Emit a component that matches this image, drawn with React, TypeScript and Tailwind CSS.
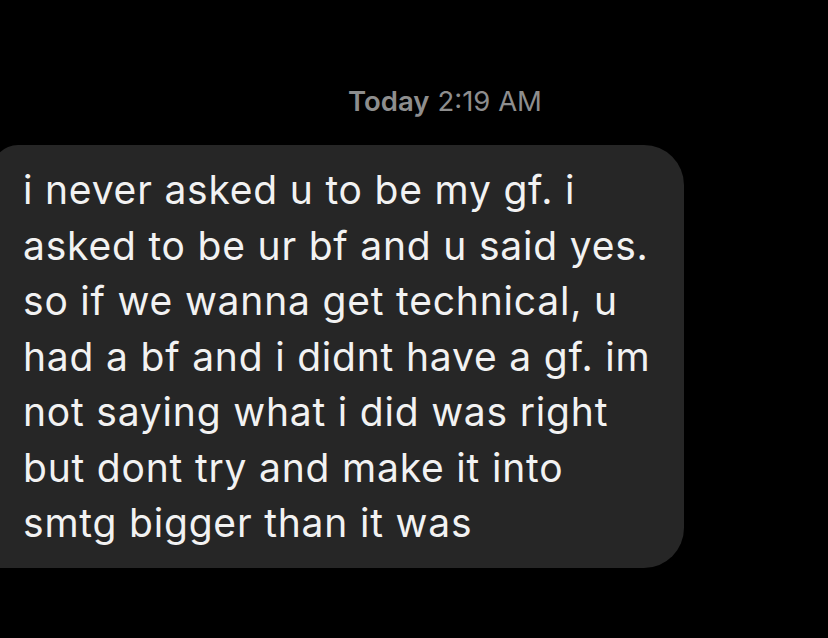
import React from "react";

const lines = [
  "i never asked u to be my gf. i",
  "asked to be ur bf and u said yes.",
  "so if we wanna get technical, u",
  "had a bf and i didnt have a gf. im",
  "not saying what i did was right",
  "but dont try and make it into",
  "smtg bigger than it was",
];

export default function App() {
  return (
    <div
      className="w-[828px] h-[638px] bg-black overflow-hidden flex flex-col"
      style={{ fontFamily: "Inter, 'Noto Sans', sans-serif" }}
    >
      <div className="h-[84px]" />
      <div className="flex justify-center pl-[62px] text-[27.5px] leading-[34px] text-[#8e8e8e]">
        <span className="font-semibold">Today</span>
        <span className="ml-[8px]">2:19 AM</span>
      </div>
      <div className="h-[27px]" />
      <div className="flex">
        <div className="ml-[-8px] w-[692px] h-[423px] bg-[#262626] rounded-tl-[26px] rounded-tr-[40px] rounded-br-[40px] rounded-bl-[8px] pl-[31px] pt-[17px]">
          {lines.map((l, i) => (
            <div
              key={i}
              className="text-[39px] leading-[55.5px] text-[#f2f2f2] whitespace-nowrap tracking-[0.8px]"
            >
              {l}
            </div>
          ))}
        </div>
      </div>
    </div>
  );
}
